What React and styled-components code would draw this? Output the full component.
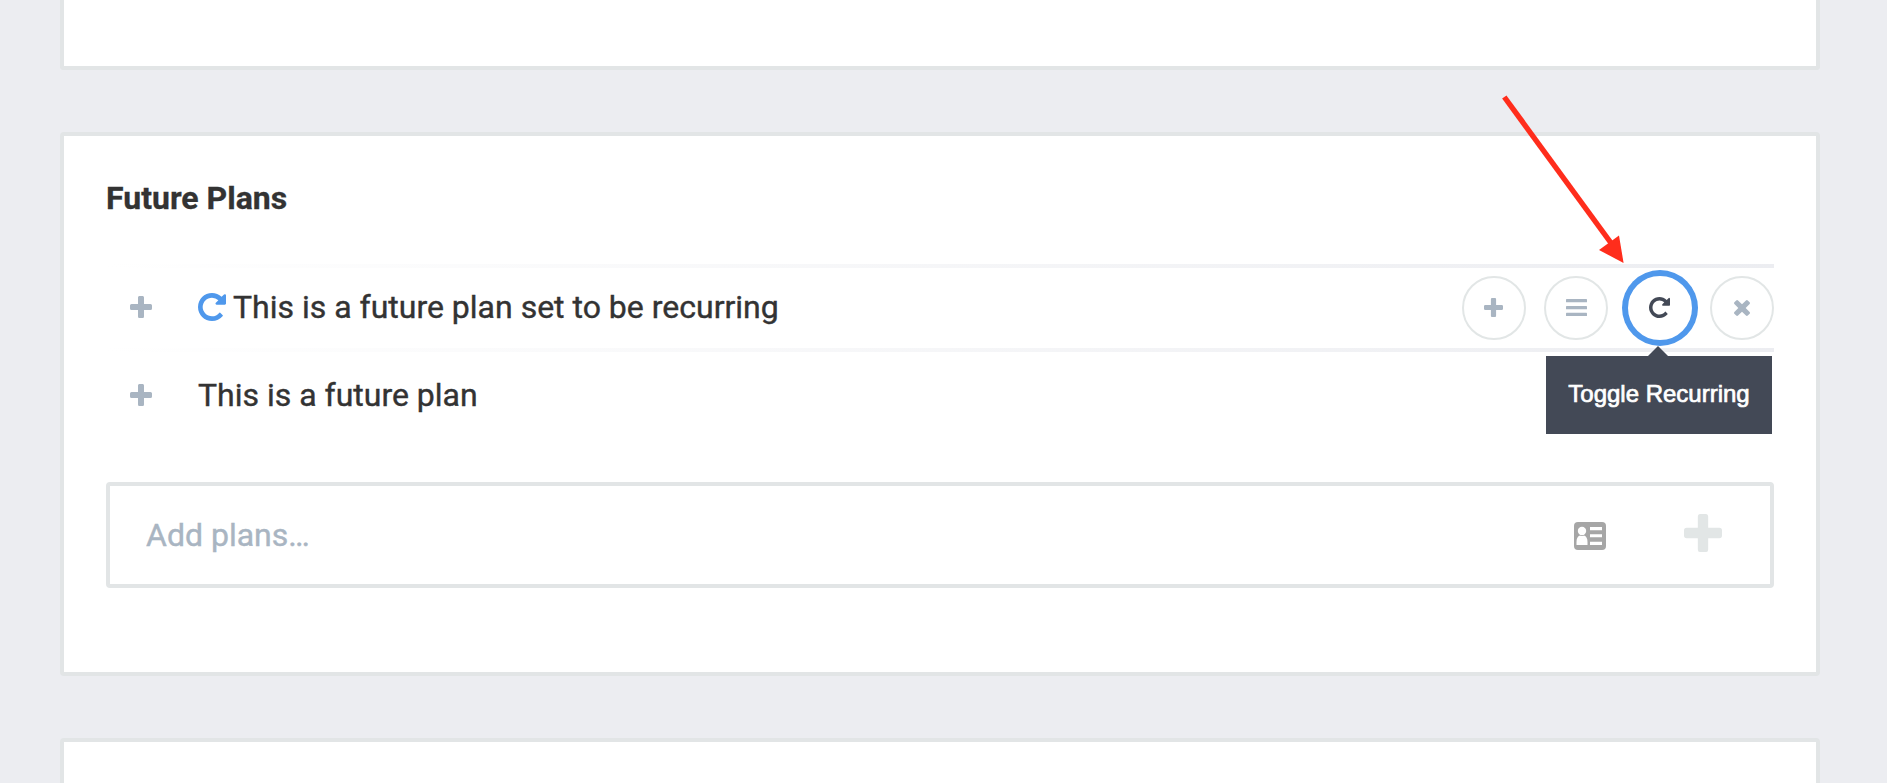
import React from 'react';
import styled, { createGlobalStyle } from 'styled-components';


const GlobalStyle = createGlobalStyle`
  * {
    box-sizing: border-box;
  }

  body {
    margin: 0;
    background: #ecedf1;
    font-family: Roboto, sans-serif;
    color: #333333;
    overflow: hidden;
  }
`;

const Page = styled.div`
  position: relative;
  display: flex;
  flex-direction: column;
  gap: 62px;
  height: 783px;
  padding: 0 67px 0 60px;
  overflow: hidden;
`;

const Card = styled.section`
  flex: none;
  height: ${({ $height }) => $height}px;
  padding: 0 42px;
  background: #ffffff;
  border: 4px solid #e2e5e6;
  border-width: ${({ $edges }) => $edges || '4px'};
  border-radius: ${({ $corners }) => $corners || '4px'};
`;

const Title = styled.h2`
  margin: 0;
  padding-top: 42px;
  height: 128px;
  font-size: 32px;
  line-height: 40px;
  font-weight: 700;
  -webkit-text-stroke: 0.3px #333333;
`;

const Row = styled.div`
  display: flex;
  align-items: center;
  height: 88px;
  border: solid transparent;
  border-width: 4px 0;
  ${({ $active }) => $active && `
    border-image: linear-gradient(to right, #ffffff 0%, #ecedf1 100%) 4;
    border-image-width: 4px 0;
  `}
`;

const AddButton = styled.button`
  display: flex;
  width: 92px;
  padding: 0 0 2px 24px;
  border: 0;
  background: none;
  color: #a9b5c2;
`;

const PlanText = styled.span`
  display: flex;
  align-items: center;
  gap: 7px;
  flex: 1;
  padding-bottom: 2px;
  font-size: 32px;
  line-height: 40px;
  -webkit-text-stroke: 0.4px #333333;
`;

const RecurringMark = styled.span`
  display: flex;
  color: #4f98ec;
`;

const Actions = styled.div`
  display: flex;
  gap: 18px;
`;

const CircleButton = styled.button`
  position: relative;
  display: flex;
  align-items: center;
  justify-content: center;
  width: 64px;
  height: 64px;
  padding: ${({ $nudge }) => ($nudge ? '0 1px 2px 0' : '0')};
  border: 2px solid #e2e6e6;
  border-radius: 50%;
  background: #ffffff;
  color: #a9b5c2;
  ${({ $active }) => $active && `
    margin-left: 2px;
    border-color: #ffffff;
    box-shadow: 0 0 0 6px #4f98ec;
    color: #434956;
  `}
`;

const Tooltip = styled.span`
  position: absolute;
  top: 78px;
  left: -84px;
  width: 226px;
  height: 78px;
  background: #434956;
  color: #ffffff;
  font-family: "Liberation Sans", Arial, sans-serif;
  font-size: 24px;
  line-height: 76px;
  text-align: center;
  white-space: nowrap;
  -webkit-text-stroke: 0.7px #ffffff;
  z-index: 1;

  &::before {
    content: '';
    position: absolute;
    left: 102px;
    top: -10px;
    border: solid transparent;
    border-width: 0 10px 10px;
    border-bottom-color: #434956;
  }
`;

const InputBox = styled.div`
  display: flex;
  align-items: center;
  height: 106px;
  margin-top: 42px;
  padding: 0 48px 0 36px;
  border: 4px solid #e2e5e6;
  border-radius: 4px;
`;

const Input = styled.input`
  flex: 1;
  height: 60px;
  padding: 0 0 1px;
  border: 0;
  outline: 0;
  font-family: Roboto, sans-serif;
  font-size: 32px;

  &::placeholder {
    color: #a9b5c2;
    opacity: 1;
    -webkit-text-stroke: 0.4px #a9b5c2;
  }
`;

const InputIcon = styled.span`
  display: flex;
  color: ${({ $color }) => $color};
  margin: ${({ $margin }) => $margin};
`;

const Arrow = styled.svg`
  position: absolute;
  left: 1490px;
  top: 86px;
  z-index: 2;
`;

const Plus = ({ size }) => (
  <svg width={size} height={size} viewBox="0 0 22 22" fill="currentColor">
    <path d="M9.2 0h3.6q1.2 0 1.2 1.5V8h6.5q1.5 0 1.5 1.5v3q0 1.5-1.5 1.5H14v6.5q0 1.5-1.2 1.5H9.2Q8 22 8 20.5V14H1.5Q0 14 0 12.5v-3Q0 8 1.5 8H8V1.5Q8 0 9.2 0z" />
  </svg>
);

const Repeat = ({ size }) => (
  <svg width={size} height={size} viewBox="0 0 1536 1536" fill="currentColor">
    <path d="M1536 128v448q0 26-19 45t-45 19h-448q-42 0-59-40-17-39 14-69l138-138q-148-137-349-137-104 0-198.5 40.5t-163.5 109.5-109.5 163.5-40.5 198.5 40.5 198.5 109.5 163.5 163.5 109.5 198.5 40.5q119 0 225-52t179-147q7-10 23-12 15 0 25 9l137 138q9 8 9.5 20.5t-7.5 22.5q-109 132-264 204.5t-327 72.5q-156 0-298-61t-245-164-164-245-61-298 61-298 164-245 245-164 298-61q147 0 284.5 55.5t244.5 156.5l130-129q29-31 70-14 39 17 39 59z" />
  </svg>
);

const Bars = () => (
  <svg width="22" height="18" viewBox="0 0 22 18" fill="currentColor">
    <rect x="1" y="0" width="21" height="3.3" rx="0.6" />
    <rect x="1" y="7" width="21" height="3.3" rx="0.6" />
    <rect x="1" y="13.8" width="21" height="3.3" rx="0.6" />
  </svg>
);

const Times = () => (
  <svg width="16" height="16" viewBox="0 0 1188 1188" fill="currentColor">
    <path d="M1188 956q0 40-28 68l-136 136q-28 28-68 28t-68-28L594 866l-294 294q-28 28-68 28t-68-28L28 1024Q0 996 0 956t28-68l294-294L28 300Q0 272 0 232t28-68L164 28Q192 0 232 0t68 28l294 294L888 28q28-28 68-28t68 28l136 136q28 28 28 68t-28 68L866 594l294 294q28 28 28 68z" />
  </svg>
);

const AddressCard = () => (
  <svg width="32" height="28" viewBox="0 0 32 28">
    <rect width="32" height="28" rx="4" fill="#a6a6a6" />
    <circle cx="8" cy="9" r="4.2" fill="#ffffff" />
    <path d="M2.5 23v-3q0-5.5 3.5-6.5 2 1.2 4 0 3.5 1 3.5 6.5v3z" fill="#ffffff" />
    <path d="M16 5h12v3.3H16zM16 12.3h12v3H16zM16 19.7h12V23H16z" fill="#ffffff" />
  </svg>
);

function FuturePlans() {
  return (
    <>
      <GlobalStyle />
      <Page>
        <Card $height={70} $edges="0 4px 4px" $corners="0 0 4px 4px" />

        <Card $height={544}>
          <Title>Future Plans</Title>

          <Row $active>
            <AddButton aria-label="Add"><Plus size={22} /></AddButton>
            <PlanText>
              <RecurringMark><Repeat size={28} /></RecurringMark>
              This is a future plan set to be recurring
            </PlanText>
            <Actions>
              <CircleButton $nudge><Plus size={19} /></CircleButton>
              <CircleButton><Bars /></CircleButton>
              <CircleButton $active $nudge>
                <Repeat size={21} />
                <Tooltip>Toggle Recurring</Tooltip>
              </CircleButton>
              <CircleButton><Times /></CircleButton>
            </Actions>
          </Row>

          <Row>
            <AddButton aria-label="Add"><Plus size={22} /></AddButton>
            <PlanText>This is a future plan</PlanText>
          </Row>

          <InputBox>
            <Input placeholder="Add plans…" />
            <InputIcon $color="#a6a6a6" $margin="2px 78px 0 0"><AddressCard /></InputIcon>
            <InputIcon $color="#e2e6e6" $margin="-4px 0 0"><Plus size={38} /></InputIcon>
          </InputBox>
        </Card>

        <Card $height={80} $corners="4px 4px 0 0" />

        <Arrow width="150" height="190" viewBox="0 0 150 190">
          <path d="M14.3 11L121 157" stroke="#ff2d1c" strokeWidth="5.4" />
          <path d="M133.6 177L109 164L129 149.5z" fill="#ff2d1c" />
        </Arrow>
      </Page>
    </>
  );
};

export default FuturePlans;
